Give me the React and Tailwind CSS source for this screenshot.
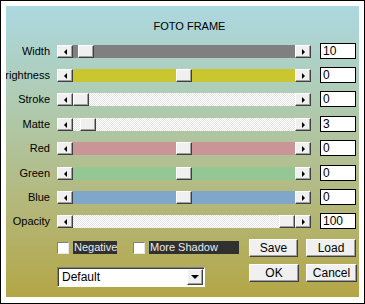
import React from "react";

const DOTS =
  "bg-[image:repeating-conic-gradient(#ffffff_0_25%,#e4e4e4_0_50%)] bg-[length:2px_2px]";
const RAISED =
  "bg-[#f0f0f0] border border-t-white border-l-white border-r-[#404040] border-b-[#404040] shadow-[inset_-1px_-1px_0_#a0a0a0]";

const rows = [
  {label: "Width", value: "10", track: "bg-[#808080]", pos: 5, h: "h-[24px]"},
  {label: "Brightness", value: "0", track: "bg-[#c9c62f]", pos: 103, h: "h-[24px]"},
  {label: "Stroke", value: "0", track: DOTS, pos: 0, h: "h-[25px]"},
  {label: "Matte", value: "3", track: DOTS, pos: 7, h: "h-[24px]"},
  {label: "Red", value: "0", track: "bg-[#c99597]", pos: 103, h: "h-[25px]"},
  {label: "Green", value: "0", track: "bg-[#94c794]", pos: 103, h: "h-[24px]"},
  {label: "Blue", value: "0", track: "bg-[#80a7c9]", pos: 103, h: "h-[24px]"},
  {label: "Opacity", value: "100", track: DOTS, pos: 206, h: "h-[13px]"},
];

const ArrowBtn = ({dir}) => (
  <div className={`${RAISED} w-[16px] h-[13px] flex items-center justify-center shrink-0`}>
    {dir === "left" ? (
      <div className="w-0 h-0 border-y-[3px] border-y-transparent border-r-[3px] border-r-black ml-[1px]" />
    ) : (
      <div className="w-0 h-0 border-y-[3px] border-y-transparent border-l-[3px] border-l-black ml-[1px]" />
    )}
  </div>
);

const SliderRow = ({row}) => (
  <div className={`flex items-start ${row.h}`}>
    <div className="w-[44px] h-[13px] flex justify-end items-center whitespace-nowrap text-[11px] leading-[13px] text-black">
      {row.label}
    </div>
    <div className="ml-[7px] flex">
      <ArrowBtn dir="left" />
      <div className={`w-[222px] h-[13px] flex ${row.track}`}>
        <div className={`${RAISED} w-[16px] h-[13px]`} style={{marginLeft: row.pos}} />
      </div>
      <ArrowBtn dir="right" />
    </div>
    <div className="ml-[9px] -mt-[2px] w-[36px] h-[16px] border border-black bg-white pl-[2px] text-[12px] leading-[14px] text-black">
      {row.value}
    </div>
  </div>
);

const Check = ({label, width}) => (
  <div className="flex items-center">
    <div className="w-[12px] h-[12px] bg-white border border-t-[#808080] border-l-[#808080] border-r-[#e8e8e8] border-b-[#e8e8e8]" />
    <div
      className={`ml-[4px] h-[13px] bg-[#303030] text-[#ececec] text-[11px] leading-[13px] pl-[1px] ${width}`}
    >
      {label}
    </div>
  </div>
);

const Btn = ({children, w}) => (
  <button className={`${RAISED} ${w} h-[18px] text-[12px] leading-[16px] text-black`}>
    {children}
  </button>
);

export default function App() {
  return (
    <div className="w-[365px] h-[304px] border border-black bg-white p-[5px] pb-[6px] font-['Liberation_Sans',Arial,sans-serif]">
      <div className="w-[353px] h-[291px] overflow-hidden bg-[linear-gradient(180deg,#acd8e0_0%,#afcbb2_33%,#b3bb84_62%,#b4a646_100%)] pt-[14px]">
        <div className="pl-[14px] text-center text-[11px] leading-[13px] text-black">FOTO FRAME</div>
        <div className="mt-[12px] flex flex-col">
          {rows.map((row) => (
            <SliderRow key={row.label} row={row} />
          ))}
        </div>
        <div className="mt-[11px] flex">
          <div className="w-[243px] pl-[51px] flex flex-col">
            <div className="mt-[2px] flex items-center">
              <Check label="Negative" width="w-[44px]" />
              <div className="ml-[16px]">
                <Check label="More Shadow" width="w-[90px]" />
              </div>
            </div>
            <div className="mt-[13px] w-[148px] h-[20px] bg-white border border-t-[#808080] border-l-[#808080] border-r-white border-b-white shadow-[inset_1px_1px_0_#404040] flex items-center">
              <span className="pl-[4px] flex-1 text-[12px] leading-[14px] text-black">Default</span>
              <div className={`${RAISED} w-[16px] h-[16px] mr-[1px] flex items-center justify-center`}>
                <div className="w-0 h-0 border-x-[4px] border-x-transparent border-t-[4px] border-t-black" />
              </div>
            </div>
          </div>
          <div className="grid grid-cols-[50px_51px] gap-x-[7px] gap-y-[7px] content-start">
            <Btn w="w-[49px]">Save</Btn>
            <Btn w="w-[50px]">Load</Btn>
            <Btn w="w-[50px]">OK</Btn>
            <Btn w="w-[51px]">Cancel</Btn>
          </div>
        </div>
      </div>
    </div>
  );
}
